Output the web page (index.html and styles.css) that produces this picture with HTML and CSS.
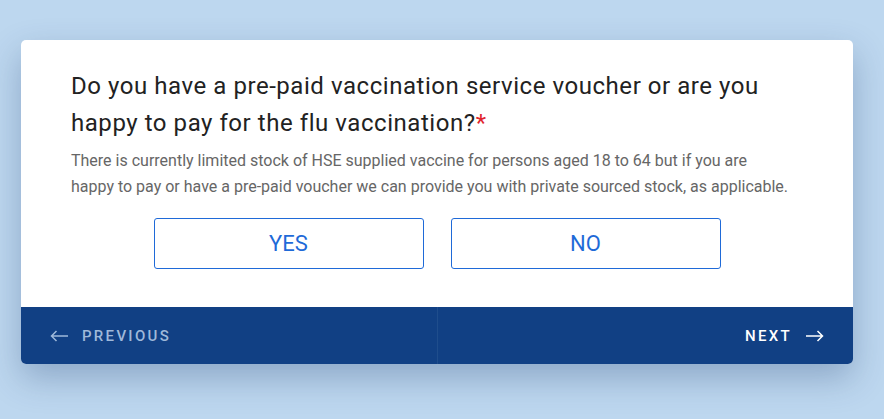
FILE: index.html
```html
<!DOCTYPE html>
<html lang="en">
<head>
    <meta charset="UTF-8">
    <title>Flu Vaccination</title>
    <link rel="stylesheet" href="styles.css">
</head>
<body>
    <div class="card">
        <div class="card-body">
            <h2 class="question">Do you have a pre-paid vaccination service voucher or are you happy to pay for the flu vaccination?<span class="required">*</span></h2>
            <p class="hint">There is currently limited stock of HSE supplied vaccine for persons aged 18 to 64 but if you are happy to pay or have a pre-paid voucher we can provide you with private sourced stock, as applicable.</p>
            <div class="choices">
                <button class="choice-btn">YES</button>
                <button class="choice-btn">NO</button>
            </div>
        </div>
        <div class="card-footer">
            <button class="nav-btn prev">
                <svg width="19" height="12" viewBox="0 0 19 12"><path d="M18 6H1.5M6.5 1L1.5 6l5 5" fill="none" stroke="currentColor" stroke-width="1.5"/></svg>
                PREVIOUS
            </button>
            <button class="nav-btn next">
                NEXT
                <svg width="19" height="12" viewBox="0 0 19 12"><path d="M1 6h16.5M12.5 1l5 5-5 5" fill="none" stroke="currentColor" stroke-width="1.5"/></svg>
            </button>
        </div>
    </div>
</body>
</html>
```

FILE: styles.css
```css
* {
    margin: 0;
    padding: 0;
    box-sizing: border-box;
    font-family: Roboto, "Liberation Sans", sans-serif;
}

body {
    background-color: #bdd7ef;
    padding: 40px 31px 0 21px;
    min-height: 100vh;
}

.card {
    background-color: white;
    border-radius: 5px;
    overflow: hidden;
    box-shadow: 0 14px 34px rgba(30, 60, 110, 0.3);
}

.card-body {
    padding: 28px 50px 38px 50px;
}

.question {
    font-size: 24px;
    font-weight: 400;
    line-height: 37px;
    letter-spacing: 0.55px;
    color: #222;
}

.required {
    color: #e0242c;
}

.hint {
    font-size: 16px;
    line-height: 26px;
    color: #666;
    margin-top: 6px;
    margin-right: 10px;
}

.choices {
    display: flex;
    justify-content: center;
    gap: 27px;
    margin-top: 18px;
}

.choice-btn {
    width: 270px;
    height: 51px;
    background: white;
    border: 1px solid #1f6ad8;
    border-radius: 3px;
    color: #1f6ad8;
    font-size: 22px;
    cursor: pointer;
}

.card-footer {
    display: flex;
    background-color: #114084;
    height: 57px;
}

.nav-btn {
    flex: 1;
    display: flex;
    align-items: center;
    gap: 13px;
    background: none;
    border: none;
    font-size: 15px;
    font-weight: 500;
    letter-spacing: 2.3px;
    cursor: pointer;
}

.prev {
    color: #9fb9da;
    padding-left: 29px;
    border-right: 1px solid #1f4d8c;
}

.next {
    color: white;
    justify-content: flex-end;
    padding-right: 29px;
}
```
